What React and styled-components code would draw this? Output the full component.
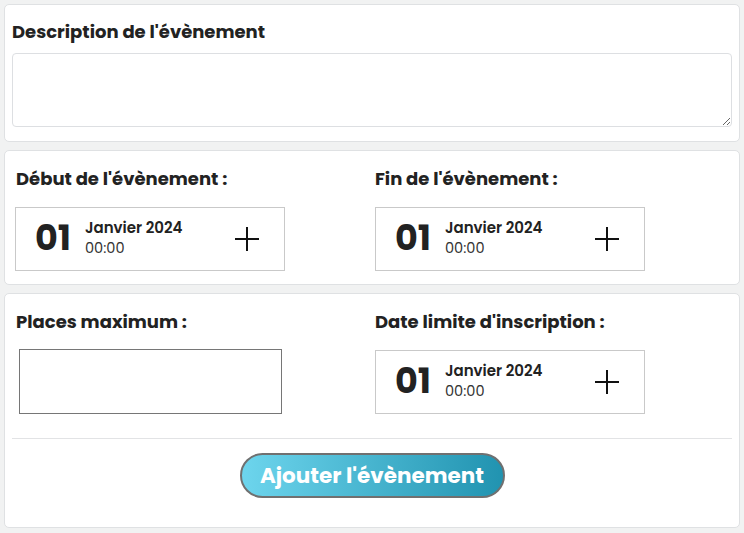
import React from "react";
import styled, { createGlobalStyle } from "styled-components";

const Global = createGlobalStyle`
  html, body { margin: 0; padding: 0; background: #f1f2f2; }
  body { font-family: "Poppins", "Open Sans", sans-serif; color: #222; }
  * { box-sizing: border-box; }
`;

const Page = styled.div`
  padding: 4px;
  display: flex;
  flex-direction: column;
  gap: 8px;
`;

const Card = styled.section`
  background: #fff;
  border: 1px solid #dfe1e3;
  border-radius: 5px;
  padding: ${(p) => p.$pad || "16px 7px 15px"};
  display: flex;
  flex-direction: column;
`;

const Title = styled.h2`
  margin: 0 0 ${(p) => p.$mb || 8}px;
  font-size: 18px;
  line-height: 24px;
  font-weight: 700;
  color: #222;
`;

const TextArea = styled.textarea`
  display: block;
  width: 100%;
  height: 74px;
  border: 1px solid #dddfe2;
  border-radius: 4px;
  resize: vertical;
  font-family: inherit;
  outline: none;
`;

const Grid = styled.div`
  display: grid;
  grid-template-columns: 1fr 1fr;
  column-gap: 6px;
  padding: 0 4px;
`;

const Field = styled.div`
  display: flex;
  flex-direction: column;
  align-items: flex-start;
`;

const DateBox = styled.div`
  width: 270px;
  height: 64px;
  margin-left: ${(p) => p.$ml || 0}px;
  margin-top: ${(p) => p.$mt || 0}px;
  border: 1px solid #c9c9c9;
  display: flex;
  align-items: center;
  padding-left: 19px;
  padding-right: 24px;
`;

const Day = styled.span`
  font-size: 35px;
  font-weight: 700;
  line-height: 1;
  color: #222;
  margin-right: 14px;
  margin-top: -4px;
`;

const Info = styled.div`
  flex: 1;
  display: flex;
  flex-direction: column;
  margin-top: -3px;
`;

const Month = styled.span`
  font-size: 15px;
  font-weight: 600;
  line-height: 21px;
  color: #222;
`;

const Time = styled.span`
  font-size: 14.5px;
  font-weight: 400;
  line-height: 20px;
  color: #333;
`;

const NumberInput = styled.input`
  width: 263px;
  height: 65px;
  margin-left: 3px;
  border: 1px solid #767676;
  border-radius: 0;
  outline: none;
`;

const Divider = styled.hr`
  width: 100%;
  margin: 24px 0 14px;
  border: 0;
  border-top: 1px solid #e2e3e5;
`;

const Button = styled.button`
  align-self: center;
  width: 265px;
  height: 45px;
  border-radius: 23px;
  border: 2px solid #707070;
  background: linear-gradient(90deg, #6dd5ed 0%, #2193b0 100%);
  color: #fff;
  font-family: inherit;
  font-size: 21.5px;
  font-weight: 700;
  line-height: 1;
  padding: 0;
  cursor: pointer;
`;

const Plus = () => (
  <svg width="26" height="26" viewBox="0 0 26 26">
    <line x1="13" y1="1" x2="13" y2="25" stroke="#111" strokeWidth="2" />
    <line x1="1" y1="13" x2="25" y2="13" stroke="#111" strokeWidth="2" />
  </svg>
);

const DatePicker = ({ ml, mt }) => (
  <DateBox $ml={ml} $mt={mt}>
    <Day>01</Day>
    <Info>
      <Month>Janvier 2024</Month>
      <Time>00:00</Time>
    </Info>
    <Plus />
  </DateBox>
);

export default function App() {
  return (
    <>
      <Global />
      <Page>
        <Card $pad="15px 7px 14px">
          <Title $mb={9}>Description de l'évènement</Title>
          <TextArea />
        </Card>
        <Card $pad="16px 7px 13px">
          <Grid>
            <Field>
              <Title $mb={16}>Début de l'évènement :</Title>
              <DatePicker ml={-1} />
            </Field>
            <Field>
              <Title $mb={16}>Fin de l'évènement :</Title>
              <DatePicker />
            </Field>
          </Grid>
        </Card>
        <Card $pad="16px 7px 29px">
          <Grid>
            <Field>
              <Title $mb={15}>Places maximum :</Title>
              <NumberInput type="text" />
            </Field>
            <Field>
              <Title $mb={15}>Date limite d'inscription :</Title>
              <DatePicker mt={1} />
            </Field>
          </Grid>
          <Divider />
          <Button>Ajouter l'évènement</Button>
        </Card>
      </Page>
    </>
  );
}
